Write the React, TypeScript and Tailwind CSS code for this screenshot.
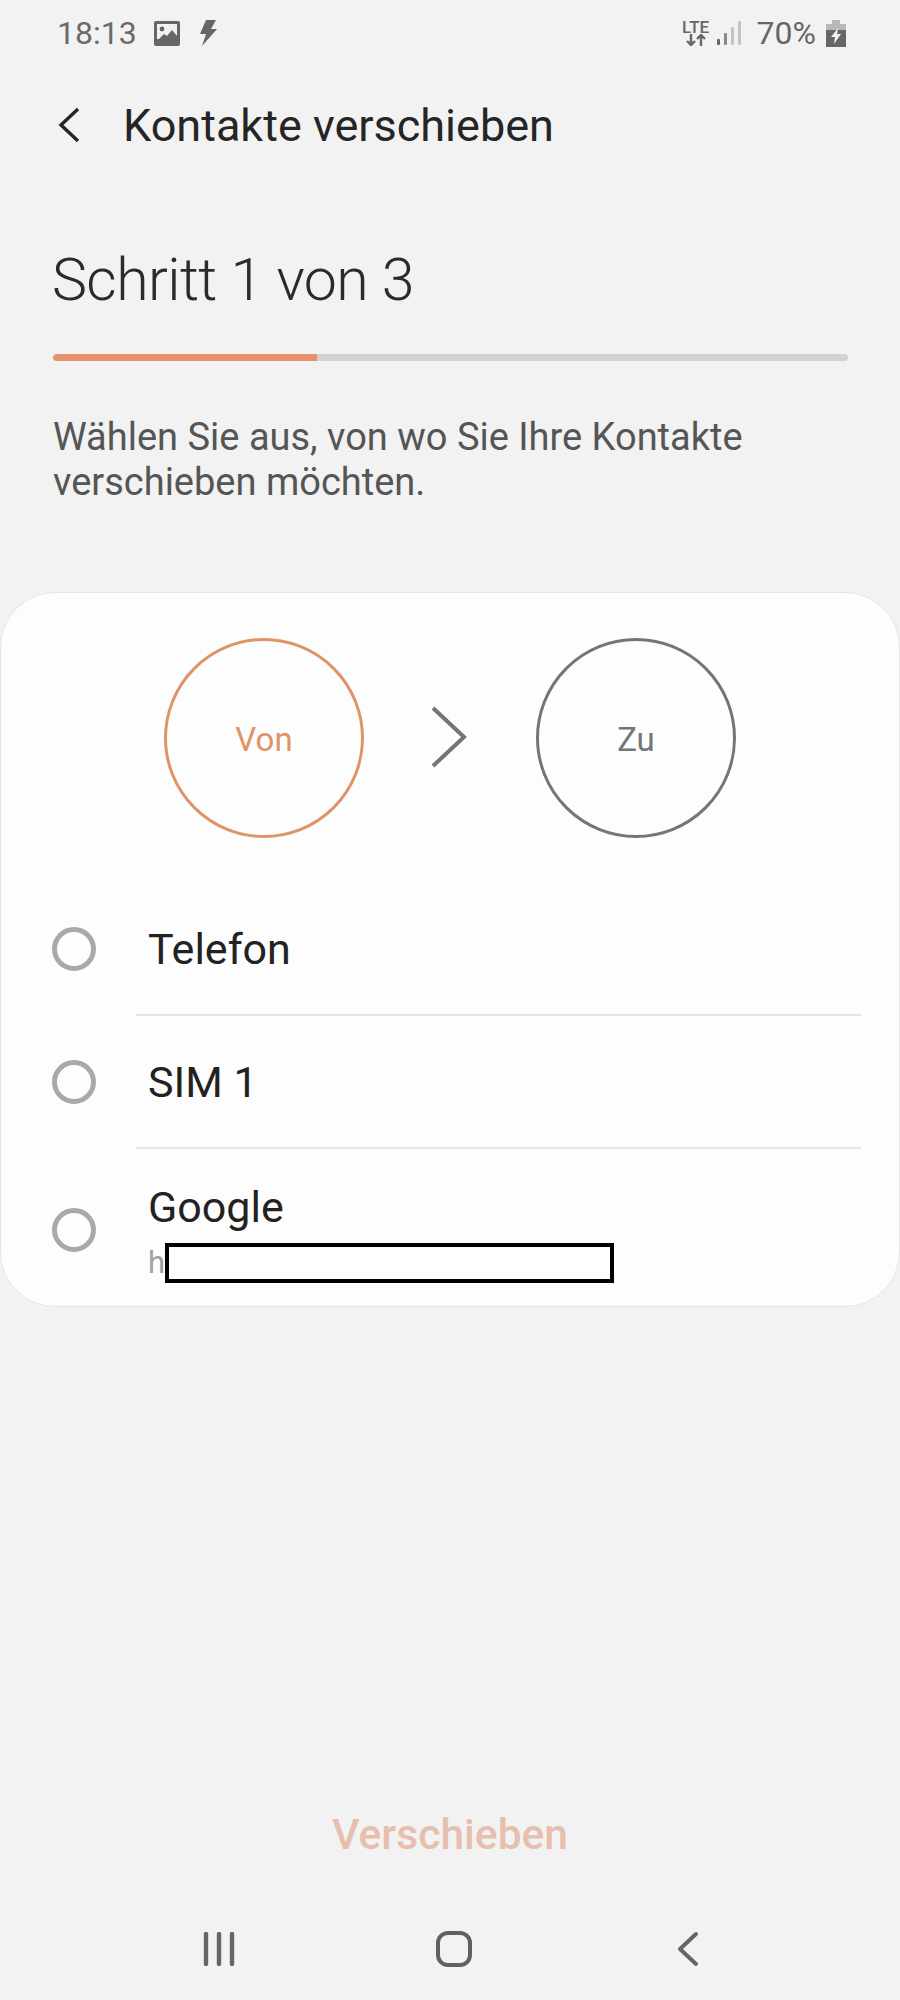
const font = { fontFamily: "Roboto, sans-serif" };

function RadioRow({ label, sub, divider }: { label: string; sub?: boolean; divider?: boolean }) {
  return (
    <div className={sub ? "h-[169px]" : "h-[133px]"}>
      <div className={sub ? "flex h-[167px] items-center pl-[51px]" : "flex h-[131px] items-center pl-[51px]"}>
        <div className={sub ? "mb-[6px] size-[44px] shrink-0 rounded-full border-[5px] border-[#a9a9a9]" : "size-[44px] shrink-0 rounded-full border-[5px] border-[#a9a9a9]"} />
        <div className="ml-[52px] min-w-0">
          <div className="text-[43px] leading-[50px] text-[#222222]">{label}</div>
          {sub && (
            <div className="mt-[11px] flex h-[40px] items-center">
              <span className="text-[31px] leading-[40px] text-[#a0a0a0]">h</span>
              <div className="h-[40px] w-[449px] border-[4px] border-black bg-white" />
            </div>
          )}
        </div>
      </div>
      {divider && <div className="ml-[135px] mr-[38px] h-[2px] bg-[#e6e6e6]" />}
    </div>
  );
}

function StatusLeft() {
  return (
    <div className="flex items-center">
      <span className="text-[32px] leading-[32px] text-[#6a6a6a]">18:13</span>
      <svg className="ml-[17px]" width="26" height="25" viewBox="0 0 26 25">
        <rect width="26" height="25" rx="2" fill="#666666" />
        <rect x="3" y="3" width="20" height="15" fill="#f2f2f2" />
        <circle cx="8" cy="8" r="2.4" fill="#666666" />
        <path d="M2 21 L10 13 L13 15 L18 9 L24 16 V22 H2 Z" fill="#666666" />
      </svg>
      <svg className="ml-[19px]" width="18" height="26" viewBox="0 0 18 26">
        <path d="M7 0 H17 L12 9 H18 L3 26 L7 14 H1 Z" fill="#666666" />
      </svg>
    </div>
  );
}

function StatusRight() {
  return (
    <div className="flex items-center">
      <div className="flex w-[26px] flex-col items-center">
        <span className="text-[17px] font-medium leading-[14px] text-[#666666]">LTE</span>
        <svg width="20" height="12" viewBox="0 0 20 12">
          <path d="M5 0 V11 M1 7 L5 11 L9 7 M15 12 V1 M11 5 L15 1 L19 5" fill="none" stroke="#666666" strokeWidth="2.4" />
        </svg>
      </div>
      <svg className="ml-[8px]" width="24" height="26" viewBox="0 0 24 26">
        <rect x="0" y="19" width="3" height="6" rx="1" fill="#666666" />
        <rect x="7" y="13" width="3" height="12" rx="1" fill="#888888" />
        <rect x="14" y="7" width="3" height="18" rx="1" fill="#c4c4c4" />
        <rect x="21" y="1" width="3" height="24" rx="1" fill="#c4c4c4" />
      </svg>
      <span className="ml-[16px] text-[32px] leading-[32px] text-[#666666]">70%</span>
      <svg className="ml-[10px]" width="20" height="27" viewBox="0 0 20 27">
        <path d="M6 0 H14 V4 H20 V27 H0 V4 H6 Z" fill="#b8b8b8" />
        <rect y="10" width="20" height="17" fill="#666666" />
        <path d="M12 8 L5 17 H9 L8 24 L15 14 H11 Z" fill="#f2f2f2" />
      </svg>
    </div>
  );
}

export default function App() {
  return (
    <div className="flex h-[2000px] w-[900px] flex-col overflow-hidden bg-[#f2f2f2]" style={font}>
      {/* status bar */}
      <div className="flex h-[64px] shrink-0 items-center justify-between pl-[57px] pr-[54px] pt-[2px]">
        <StatusLeft />
        <StatusRight />
      </div>

      {/* header */}
      <div className="flex h-[122px] shrink-0 items-center pl-[57px]">
        <svg width="24" height="36" viewBox="0 0 24 36">
          <path d="M21 2 L4 18 L21 34" fill="none" stroke="#252525" strokeWidth="3.4" />
        </svg>
        <h1 className="ml-[42px] mt-[2px] text-[45px] font-normal leading-[50px] text-[#252525]">Kontakte verschieben</h1>
      </div>

      <div className="shrink-0 pl-[52px] pt-[61px] text-[59px] font-light leading-[66px] tracking-[-0.6px] text-[#2b2b2b]">Schritt 1 von 3</div>

      <div className="ml-[53px] mt-[41px] h-[7px] w-[795px] shrink-0 overflow-hidden rounded-full bg-[#d2d2d2]">
        <div className="h-full w-[264px] rounded-l-full bg-[#e9916a]" />
      </div>

      <p className="mt-[54px] w-[800px] shrink-0 pl-[53px] text-[38px] leading-[45px] text-[#555555]">
        Wählen Sie aus, von wo Sie Ihre Kontakte
        <br />
        verschieben möchten.
      </p>

      {/* source card */}
      <div className="mt-[87px] h-[715px] w-full shrink-0 rounded-[55px] border border-[#e6e6e6] bg-[#fdfdfd]">
        <div className="flex h-[290px] items-start pl-[163px] pt-[45px]">
          <div className="flex size-[200px] items-center justify-center rounded-full border-[3px] border-[#df9468] pt-[3px] text-[33px] text-[#df9468]">Von</div>
          <svg className="ml-[67px] mt-[68px]" width="36" height="62" viewBox="0 0 36 62">
            <path d="M2 2 L33 31 L2 60" fill="none" stroke="#757575" strokeWidth="4" />
          </svg>
          <div className="ml-[69px] flex size-[200px] items-center justify-center rounded-full border-[3px] border-[#757575] pt-[3px] text-[33px] text-[#757575]">Zu</div>
        </div>
        <RadioRow label="Telefon" divider />
        <RadioRow label="SIM 1" divider />
        <RadioRow label="Google" sub />
      </div>

      {/* move action */}
      <div className="mt-[503px] shrink-0 text-center text-[42.5px] font-medium leading-[50px] text-[#e6bfae]">Verschieben</div>

      {/* nav bar */}
      <div className="relative mt-[71px] flex h-[36px] shrink-0 items-center">
        <svg className="ml-[203px]" width="32" height="34" viewBox="0 0 32 34">
          <path d="M3 2 V32 M16 2 V32 M29 2 V32" fill="none" stroke="#666666" strokeWidth="4.4" strokeLinecap="round" />
        </svg>
        <div className="ml-[201px] size-[36px] rounded-[12px] border-[4px] border-[#606060]" />
        <svg className="ml-[204px]" width="24" height="36" viewBox="0 0 24 36">
          <path d="M20 3 L4 18 L20 33" fill="none" stroke="#666666" strokeWidth="4" strokeLinecap="round" strokeLinejoin="round" />
        </svg>
      </div>
    </div>
  );
}
